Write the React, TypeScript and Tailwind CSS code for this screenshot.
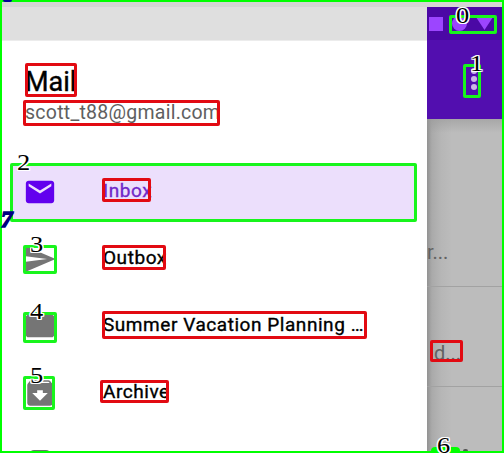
import type { ReactNode } from 'react';

function Box({ className }: { className: string }) {
  return <div className={`absolute rounded-[2px] border-[3px] ${className}`} />;
}

function Mark({ className, children }: { className: string; children: ReactNode }) {
  return (
    <span
      className={`absolute origin-left scale-x-[1.15] font-['Liberation_Serif',serif] text-[23px] leading-[17px] text-black [text-shadow:1px_0_#fff,-1px_0_#fff,0_1px_#fff,0_-1px_#fff,1px_1px_#fff,-1px_-1px_#fff,1px_-1px_#fff,-1px_1px_#fff] ${className}`}
    >
      {children}
    </span>
  );
}

function Row({ icon, label, className = '' }: { icon: ReactNode; label: string; className?: string }) {
  return (
    <div className={`flex h-[67px] shrink-0 items-center pl-[21px] ${className}`}>
      <div className="w-[80px] shrink-0">{icon}</div>
      <span className="text-[19px] tracking-[0.55px] whitespace-nowrap [-webkit-text-stroke:0.35px_currentColor]">{label}</span>
    </div>
  );
}

function Icon({ d, className = 'text-[#757575]' }: { d: string; className?: string }) {
  return (
    <svg viewBox="0 0 24 24" className={`h-[34px] w-[34px] ${className}`} fill="currentColor">
      <path d={d} />
    </svg>
  );
}

function Drawer() {
  return (
    <aside className="flex h-full w-[427px] shrink-0 flex-col overflow-hidden bg-white pl-[2px] text-black">
      <div className="h-[41px] shrink-0 border-t-[7px] border-b border-t-[#d5d5d5] border-b-[#ececec] bg-[#dfdfdf]" />
      <header className="h-[117px] shrink-0 pt-[24px] pl-[23px]">
        <h1 className="text-[27px] leading-[34px] [-webkit-text-stroke:0.4px_currentColor]">Mail</h1>
        <p className="mt-[2px] text-[19.5px] leading-[24px] tracking-[0.25px] whitespace-nowrap text-[#606060]">scott_t88@gmail.com</p>
      </header>
      <nav className="flex flex-col">
        <div className="flex h-[67px] items-center pr-[10px] pl-[9px]">
          <Row
            label="Inbox"
            className="h-[56px]! w-full bg-[#ecdffc] pl-[12px]! text-[#7128c8]"
            icon={<Icon className="text-[#6200ee]" d="M20 4H4c-1.1 0-1.99.9-1.99 2L2 18c0 1.1.9 2 2 2h16c1.1 0 2-.9 2-2V6c0-1.1-.9-2-2-2zm0 4l-8 5-8-5V6l8 5 8-5v2z" />}
          />
        </div>
        <Row label="Outbox" icon={<Icon d="M2.01 21L23 12 2.01 3 2 10l15 2-15 2z" />} />
        <Row label="Summer Vacation Planning …" icon={<Icon d="M4 4h16a2 2 0 0 1 2 2v12a2 2 0 0 1-2 2H4a2 2 0 0 1-2-2V6a2 2 0 0 1 2-2z" />} />
        <Row
          label="Archive"
          icon={<Icon d="M20.54 5.23l-1.39-1.68C18.88 3.21 18.47 3 18 3H6c-.47 0-.88.21-1.16.55L3.46 5.23C3.17 5.57 3 6.02 3 6.5V19c0 1.1.9 2 2 2h14c1.1 0 2-.9 2-2V6.5c0-.48-.17-.93-.46-1.27zM12 17.5L6.5 12H10v-2h4v2h3.5L12 17.5zM5.12 5l.81-1h12l.94 1H5.12z" />}
        />
        <div className="flex h-[27px] items-end pl-[28px]">
          <div className="mb-[-1px] h-[4px] w-[20px] rounded-t-[4px] bg-[#6f6f6f]" />
        </div>
      </nav>
    </aside>
  );
}

function Backdrop() {
  return (
    <main className="flex min-w-0 flex-1 flex-col bg-[#bcbcbc] text-[#626262]">
      <div className="h-[7px] shrink-0 bg-[#d5d5d5]" />
      <div className="h-[112px] shrink-0 bg-[#520eaf]">
        <div className="flex h-[33px] items-center gap-[9px] bg-[#4b08a5] pl-[2px]">
          <div className="h-[14px] w-[14px] bg-[#9c45ff]" />
          <div className="h-[15px] w-[15px] rounded-full bg-[#9c45ff]" />
          <div className="h-[13px] w-[17px] bg-[#9c45ff] [clip-path:polygon(0_0,100%_0,50%_100%)]" />
        </div>
        <div className="flex flex-col gap-[2px] pt-[28px] pl-[44px]">
          <i className="h-[6px] w-[6px] rounded-full bg-[#cbb4e8]" />
          <i className="h-[6px] w-[6px] rounded-full bg-[#cbb4e8]" />
          <i className="h-[6px] w-[6px] rounded-full bg-[#cbb4e8]" />
        </div>
      </div>
      <div className="flex flex-1 flex-col bg-[linear-gradient(to_bottom,#99999999,transparent_14px),linear-gradient(to_right,#929292,#aaa_5px,#b6b6b6_14px,#bcbcbc_25px)] text-[20px] leading-[24px]">
        <div className="h-[168px] shrink-0 border-b border-[#a2a2a2] pt-[121px]">r...</div>
        <div className="h-[100px] shrink-0 border-b border-[#a2a2a2] pt-[54px] pl-[7px]">d...</div>
      </div>
    </main>
  );
}

export default function App() {
  return (
    <div className="relative flex h-[453px] w-[504px] overflow-hidden font-[Roboto,sans-serif]">
      <Drawer />
      <Backdrop />
      <div className="absolute inset-0 border-2 border-[#00ff00]" />
      <div className="absolute top-0 left-[3px] h-[2px] w-[9px] rounded-b bg-[#00009a]" />
      <Box className="top-[63px] left-[25px] h-[34px] w-[52px] border-[#e20a12]" />
      <Box className="top-[100px] left-[23px] h-[26px] w-[197px] border-[#e20a12]" />
      <Box className="top-[178px] left-[102px] h-[24px] w-[49px] border-[#e20a12]" />
      <Box className="top-[245px] left-[102px] h-[25px] w-[64px] border-[#e20a12]" />
      <Box className="top-[311px] left-[102px] h-[28px] w-[265px] border-[#e20a12]" />
      <Box className="top-[380px] left-[100px] h-[23px] w-[69px] border-[#e20a12]" />
      <Box className="top-[340px] left-[430px] h-[22px] w-[33px] border-[#e20a12]" />
      <Box className="top-[163px] left-[10px] h-[59px] w-[407px] border-[#18f51c]" />
      <Box className="top-[15px] left-[449px] h-[19px] w-[48px] border-[#18f51c]" />
      <Box className="top-[64px] left-[463px] h-[34px] w-[18px] border-[#18f51c]" />
      <Box className="top-[245px] left-[23px] h-[29px] w-[34px] border-[#18f51c]" />
      <Box className="top-[312px] left-[23px] h-[31px] w-[34px] border-[#18f51c]" />
      <Box className="top-[376px] left-[23px] h-[34px] w-[32px] border-[#18f51c]" />
      <div className="absolute bottom-0 left-[431px] h-[6px] w-[29px] rounded-t bg-[#00ff00]" />
      <div className="absolute bottom-[2px] left-[463px] h-[2px] w-[5px] rounded-t-full bg-[#555]" />
      <Mark className="top-[7px] left-[456px]">0</Mark>
      <Mark className="top-[55px] left-[470px]">1</Mark>
      <Mark className="top-[154px] left-[17px]">2</Mark>
      <Mark className="top-[236px] left-[30px]">3</Mark>
      <Mark className="top-[303px] left-[30px]">4</Mark>
      <Mark className="top-[367px] left-[30px]">5</Mark>
      <Mark className="top-[437px] left-[437px]">6</Mark>
      <span className="absolute top-[209px] left-[1px] font-['Liberation_Serif',serif] text-[23px] leading-[22px] font-bold text-[#000080] italic [-webkit-text-stroke:1.5px_#000080]">7</span>
    </div>
  );
}
